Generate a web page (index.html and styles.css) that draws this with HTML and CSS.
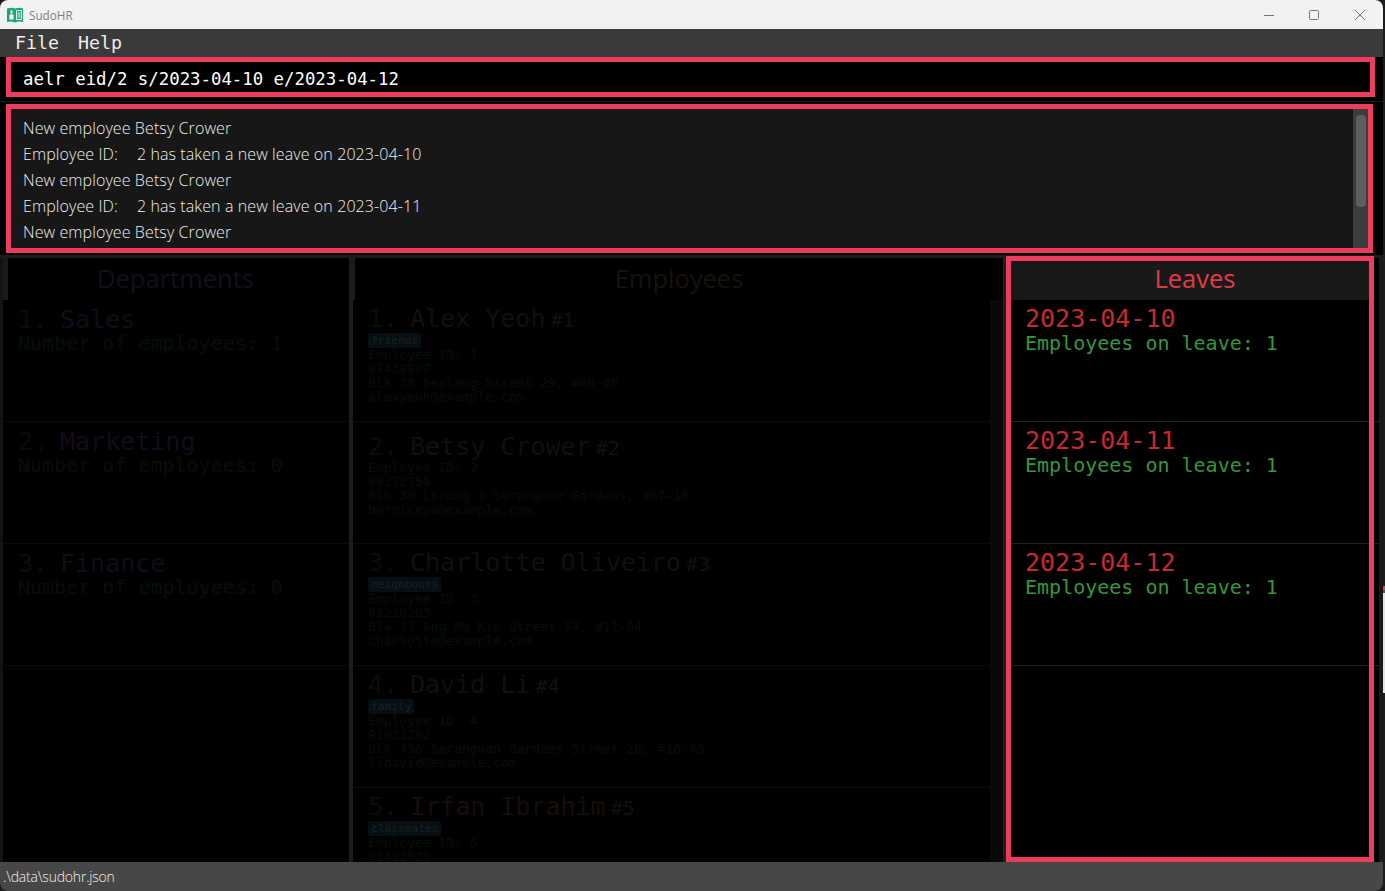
FILE: index.html
```html
<!DOCTYPE html>
<html lang="en">
<head>
    <meta charset="UTF-8">
    <title>SudoHR</title>
    <link rel="stylesheet" href="styles.css">
</head>
<body>
    <div class="window">
        <div class="titlebar">
            <svg class="app-icon" width="16" height="16" viewBox="0 0 16 16">
                <path d="M0 1.5 Q4 0 8 1.5 Q12 0 16 1.5 V15 Q12 13.8 8 15.5 Q4 13.8 0 15 Z" fill="#1fa572"/>
                <path d="M9.5 3.5 H14.5 V12.5 H9.5 Z" fill="none" stroke="#e8f5ef"/>
                <path d="M10.5 6 H13.5 M10.5 8 H13.5 M10.5 10 H13.5" stroke="#e8f5ef"/>
                <rect x="2.5" y="7.5" width="4" height="5" fill="#fff"/>
                <rect x="3.5" y="3.5" width="2" height="3" fill="#fff"/>
            </svg>
            <span class="app-name">SudoHR</span>
            <div class="win-btns">
                <svg width="12" height="12" viewBox="0 0 12 12"><path d="M1 6.5 H11" stroke="#777" fill="none"/></svg>
                <svg width="12" height="12" viewBox="0 0 12 12"><rect x="1.5" y="1.5" width="9" height="9" rx="1" stroke="#777" fill="none"/></svg>
                <svg class="win-close" width="12" height="12" viewBox="0 0 12 12"><path d="M1 1 L11 11 M11 1 L1 11" stroke="#777" fill="none"/></svg>
            </div>
        </div>

        <div class="menubar">
            <span>File</span>
            <span>Help</span>
        </div>

        <div class="command-row">
            <div class="command-box">aelr eid/2 s/2023-04-10 e/2023-04-12</div>
        </div>

        <div class="result-row">
            <div class="result-box">
                <div class="result-text">
                    <p>New employee Betsy Crower</p>
                    <p>Employee ID:<span class="tab"></span>2 has taken a new leave on 2023-04-10</p>
                    <p>New employee Betsy Crower</p>
                    <p>Employee ID:<span class="tab"></span>2 has taken a new leave on 2023-04-11</p>
                    <p>New employee Betsy Crower</p>
                </div>
                <div class="scrollbar"><div class="thumb"></div></div>
            </div>
        </div>

        <div class="lists">
            <section class="panel dept-panel">
                <h2 class="panel-title dept-title">Departments</h2>
                <div class="row">
                    <div class="row-name"><span class="idx">1.</span><span class="dept-name">Sales</span></div>
                    <div class="row-sub">Number of employees: 1</div>
                </div>
                <div class="row">
                    <div class="row-name"><span class="idx">2.</span><span class="dept-name">Marketing</span></div>
                    <div class="row-sub">Number of employees: 0</div>
                </div>
                <div class="row">
                    <div class="row-name"><span class="idx">3.</span><span class="dept-name">Finance</span></div>
                    <div class="row-sub">Number of employees: 0</div>
                </div>
            </section>

            <section class="panel emp-panel">
                <h2 class="panel-title emp-title">Employees</h2>
                <div class="emp-list">
                    <div class="row">
                        <div class="row-name"><span class="idx">1.</span><span class="emp-name">Alex Yeoh</span><span class="emp-id">#1</span></div>
                        <div class="tags"><span class="tag">friends</span></div>
                        <div class="detail">Employee ID: 1</div>
                        <div class="detail">87438807</div>
                        <div class="detail">Blk 30 Geylang Street 29, #06-40</div>
                        <div class="detail">alexyeoh@example.com</div>
                    </div>
                    <div class="row row-notag">
                        <div class="row-name"><span class="idx">2.</span><span class="emp-name">Betsy Crower</span><span class="emp-id">#2</span></div>
                        <div class="detail">Employee ID: 2</div>
                        <div class="detail">99272758</div>
                        <div class="detail">Blk 30 Lorong 3 Serangoon Gardens, #07-18</div>
                        <div class="detail">berniceyu@example.com</div>
                    </div>
                    <div class="row">
                        <div class="row-name"><span class="idx">3.</span><span class="emp-name">Charlotte Oliveiro</span><span class="emp-id">#3</span></div>
                        <div class="tags"><span class="tag">neighbours</span></div>
                        <div class="detail">Employee ID: 3</div>
                        <div class="detail">93210283</div>
                        <div class="detail">Blk 11 Ang Mo Kio Street 74, #11-04</div>
                        <div class="detail">charlotte@example.com</div>
                    </div>
                    <div class="row">
                        <div class="row-name"><span class="idx">4.</span><span class="emp-name">David Li</span><span class="emp-id">#4</span></div>
                        <div class="tags"><span class="tag">family</span></div>
                        <div class="detail">Employee ID: 4</div>
                        <div class="detail">91031282</div>
                        <div class="detail">Blk 436 Serangoon Gardens Street 26, #16-43</div>
                        <div class="detail">lidavid@example.com</div>
                    </div>
                    <div class="row">
                        <div class="row-name"><span class="idx">5.</span><span class="emp-name">Irfan Ibrahim</span><span class="emp-id">#5</span></div>
                        <div class="tags"><span class="tag">classmates</span></div>
                        <div class="detail">Employee ID: 5</div>
                        <div class="detail">92492021</div>
                    </div>
                </div>
            </section>

            <section class="panel leave-panel">
                <h2 class="panel-title leave-title">Leaves</h2>
                <div class="row leave-row">
                    <div class="leave-date">2023-04-10</div>
                    <div class="leave-count">Employees on leave: 1</div>
                </div>
                <div class="row leave-row">
                    <div class="leave-date">2023-04-11</div>
                    <div class="leave-count">Employees on leave: 1</div>
                </div>
                <div class="row leave-row">
                    <div class="leave-date">2023-04-12</div>
                    <div class="leave-count">Employees on leave: 1</div>
                </div>
            </section>
            <div class="leave-gutter">
                <div></div>
                <div></div>
                <div></div>
            </div>
        </div>

        <div class="statusbar">.\data\sudohr.json</div>
    </div>
</body>
</html>
```

FILE: styles.css
```css
* {
    box-sizing: border-box;
}
html, body {
    margin: 0;
    padding: 0;
    height: 100%;
    overflow: hidden;
}
body {
    /* bit of the desktop showing past the window edge */
    background: linear-gradient(to bottom,
        #1c1c1c 0, #1c1c1c 586px,
        #ec3d5e 586px, #ec3d5e 590px,
        #555 590px, #555 593px,
        #e4e4e4 593px, #e4e4e4 693px,
        #1c1c1c 693px);
    font-family: "Open Sans", "Noto Sans", sans-serif;
}
.window {
    width: 1383px;
    height: 891px;
    display: flex;
    flex-direction: column;
    background: #000;
    border-radius: 8px;
    overflow: hidden;
}

/* title bar */
.titlebar {
    height: 29px;
    flex: none;
    background-color: #f2f2f2;
    display: flex;
    align-items: center;
    padding-left: 7px;
}
.app-name {
    margin-left: 6px;
    font-size: 11.7px;
    color: #808080;
}
.win-btns {
    margin-left: auto;
    display: flex;
    gap: 33px;
    padding-right: 17px;
}
.win-close {
    margin-left: 1px;
}

/* menu */
.menubar {
    height: 28px;
    flex: none;
    background-color: #3a3a3a;
    display: flex;
    gap: 19px;
    align-items: center;
    padding: 0 0 2px 15px;
    font-family: "DejaVu Sans Mono", monospace;
    font-size: 18.3px;
    color: #eee;
}

/* command + result */
.command-row {
    height: 45px;
    flex: none;
    margin-bottom: 2px;
    padding: 0 8px 0 6px;
    border-bottom: 1px solid #1c1c1c;
}
.command-box {
    height: 40px;
    border: 5px solid #ec3d5e;
    background: #000;
    padding-left: 12px;
    line-height: 34px;
    font-family: "DejaVu Sans Mono", monospace;
    font-size: 17.35px;
    color: #fff;
}
.result-row {
    height: 149px;
    flex: none;
    padding-left: 6px;
    padding-right: 10px;
}
.result-box {
    height: 149px;
    border: 5px solid #ec3d5e;
    background-color: #171717;
    display: flex;
    justify-content: space-between;
}
.result-text {
    padding: 6px 0 0 12px;
    font-size: 16px;
    font-weight: 300;
    letter-spacing: 0.1px;
    color: #eee;
}
.result-text p {
    margin: 0;
    height: 26px;
    line-height: 26px;
}
.tab {
    display: inline-block;
    width: 19px;
}
.scrollbar {
    width: 15px;
    background-color: #3c3c3c;
    padding: 6px 2px 0 3px;
}
.thumb {
    height: 92px;
    border-radius: 4px;
    background-color: #5e5e5e;
}

/* list panels */
.lists {
    flex: 1;
    display: flex;
    min-height: 0;
    margin-top: 2px;
    border-top: 3px solid #1c1c1c;
    background-color: #1a1a1a;
}
.panel {
    background: #000;
    overflow: hidden;
}
.dept-panel {
    width: 353px;
    border-left: 3px solid #131313;
    border-right: 4px solid #1c1c1c;
}
.emp-panel {
    width: 653px;
    border-right: 3px solid #1f1f1f;
}
.leave-panel {
    width: 368px;
    border: 5px solid #ec3d5e;
    margin-top: -2px;
}
.leave-gutter {
    width: 5px;
    background: #000;
    padding-top: 42px;
}
.leave-gutter div {
    height: 122px;
    border-bottom: 1px solid #222;
}
.panel-title {
    margin: 0;
    height: 42px;
    line-height: 41px;
    text-align: center;
    font-size: 25.5px;
    font-weight: 400;
}
.dept-title {
    border-left: 5px solid #1a1a1a;
    padding-right: 6px;
    color: #150e20;
}
.emp-title {
    border-left: 2px solid #1c1c1c;
    color: #17130a;
}
.leave-title {
    height: 39px;
    line-height: 35px;
    padding-left: 10px;
    background-color: #191919;
    color: #e23b45;
}
.emp-list {
    height: 562px;
    border-right: 13px solid #090909;
}
.row {
    height: 122px;
    padding: 6px 0 0 15px;
    border-bottom: 1px solid #0b0b0b;
    font-family: "DejaVu Sans Mono", monospace;
}
.row-name {
    height: 28px;
    font-size: 25px;
    line-height: 28px;
    white-space: pre;
    display: flex;
}
.emp-list .row-name {
    height: 27px;
    line-height: 26px;
}
.idx {
    width: 42px;
    color: #051005;
}
.dept-name {
    color: #130b1a;
}
.emp-name {
    color: #150f08;
}
.emp-id {
    margin-left: 5px;
    font-size: 20px;
    line-height: 28px;
    color: #141108;
}
.row-sub {
    font-size: 20px;
    line-height: 18px;
    color: #051005;
}
.emp-list .row-notag {
    padding-top: 12px;
}
.tags {
    height: 15px;
}
.tag {
    display: block;
    width: fit-content;
    height: 15px;
    line-height: 15px;
    padding: 0 3px;
    border-radius: 2px;
    background-color: #060f13;
    color: #1c2022;
    font-size: 11.2px;
}
.detail {
    font-size: 13px;
    line-height: 14px;
    color: #051005;
}
.leave-row {
    padding: 1px 0 0 14px;
    border-bottom: 1px solid #222;
}
.leave-date {
    font-size: 25px;
    line-height: 35px;
    color: #c8282f;
}
.leave-count {
    font-size: 20px;
    line-height: 15px;
    color: #34973c;
}

/* status */
.statusbar {
    height: 29px;
    flex: none;
    background-color: #474747;
    color: #f0f0f0;
    font-size: 14px;
    font-weight: 300;
    letter-spacing: -0.2px;
    line-height: 29px;
    padding-left: 3px;
}
```
